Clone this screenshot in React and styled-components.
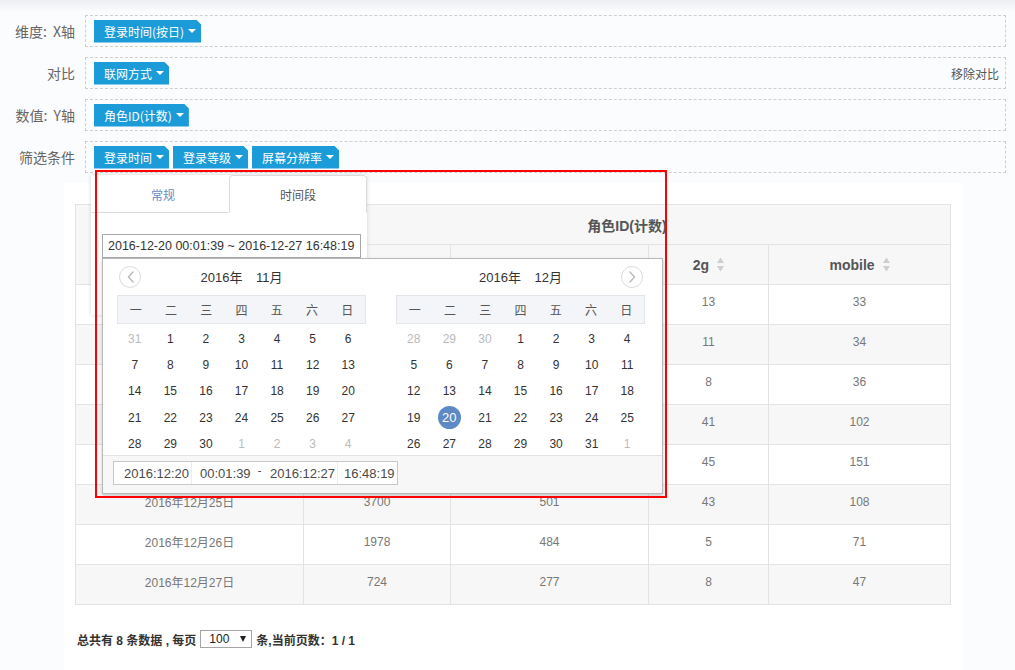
import React from 'react'
import styled, { createGlobalStyle } from 'styled-components'

const GlobalStyle = createGlobalStyle`
  html, body { margin: 0; padding: 0; }
  body {
    background: #fbfcfd;
    font-family: "Liberation Sans", "Noto Sans CJK SC", sans-serif;
    font-size: 12px;
    color: #555;
  }
`

const Page = styled.div`
  position: relative;
  width: 1015px;
  height: 670px;
  overflow: hidden;
  box-sizing: border-box;
  padding-top: 15px;
  background: linear-gradient(#eceef2 0, #fbfcfd 12px);
`

const FieldRow = styled.div`
  display: flex;
  align-items: center;
  margin-bottom: 10px;
`

const FieldLabel = styled.div`
  width: 75px;
  padding-right: 10px;
  text-align: right;
  font-family: "Noto Sans CJK SC", sans-serif;
  font-size: 14px;
  color: #666;
  white-space: nowrap;
  word-spacing: 3px;
`

const FieldBox = styled.div`
  flex: 1;
  margin-right: 9px;
  height: 32px;
  box-sizing: border-box;
  border: 1px dashed #cfcfcf;
  display: flex;
  align-items: center;
  gap: 4px;
  padding: 0 6px 0 8px;
`

const Tag = styled.div`
  height: 23px;
  display: inline-flex;
  align-items: center;
  padding: 0 5px 0 10px;
  background: #1b9bd7;
  color: #fff;
  font-family: "Noto Sans CJK SC", sans-serif;
  font-size: 12px;
  clip-path: polygon(0 0, calc(100% - 5px) 0, 100% 5px, 100% 100%, 0 100%);
`

const Caret = styled.span`
  width: 0;
  height: 0;
  margin-left: 4px;
  border-left: 4px solid transparent;
  border-right: 4px solid transparent;
  border-top: 4px solid #fff;
`

const RemoveLink = styled.span`
  margin-left: auto;
  font-family: "Noto Sans CJK SC", sans-serif;
  font-size: 12px;
  color: #555;
`

const Card = styled.div`
  margin-left: 64px;
  width: 898px;
  height: 500px;
  box-sizing: border-box;
  padding: 21px 11px 0;
  background: #fff;
`

const Table = styled.table`
  width: 875px;
  border-collapse: collapse;
  table-layout: fixed;
`

const Th = styled.th`
  height: 39px;
  padding: 0;
  border: 1px solid #e3e3e3;
  background: #f7f7f7;
  font-size: 14px;
  font-weight: bold;
  color: #555;
`

const ThInner = styled.span`
  display: inline-flex;
  align-items: center;
  gap: 8px;
`

const Tr = styled.tr`
  &:nth-child(even) td { background: #f7f7f7; }
`

const Td = styled.td`
  height: 33px;
  padding: 0 0 6px;
  border: 1px solid #e3e3e3;
  text-align: center;
  font-size: 12px;
  color: #777;
  background: #fff;
`

const Pager = styled.div`
  margin-top: 25px;
  height: 18px;
  display: flex;
  align-items: center;
  padding-left: 2px;
  font-size: 12px;
  font-weight: bold;
  color: #333;
`

const PageSelect = styled.div`
  width: 52px;
  height: 18px;
  box-sizing: border-box;
  margin: 0 4px;
  padding: 0 5px 0 8px;
  border: 1px solid #a5a5a5;
  background: #fff;
  display: flex;
  align-items: center;
  justify-content: space-between;
  font-weight: normal;
  color: #222;
  font-size: 12px;
`

const SelectArrow = styled.span`
  width: 0;
  height: 0;
  border-left: 3.5px solid transparent;
  border-right: 3.5px solid transparent;
  border-top: 6px solid #222;
`

/* time range popup */
const Popup = styled.div`
  position: absolute;
  left: 91px;
  top: 175px;
  width: 276px;
  height: 140px;
  background: #fff;
  box-shadow: 0 0 4px rgba(0, 0, 0, 0.16);
  z-index: 5;
`

const Tabs = styled.div`
  display: flex;
  height: 38px;
`

const TabItem = styled.div`
  flex: 0 0 138px;
  box-sizing: border-box;
  display: flex;
  align-items: center;
  justify-content: center;
  font-family: "Noto Sans CJK SC", sans-serif;
  font-size: 12px;
  color: ${(p) => (p.$active ? '#555' : '#6a8cc2')};
  border: 1px solid ${(p) => (p.$active ? '#dcdcdc' : 'transparent')};
  border-bottom-color: ${(p) => (p.$active ? 'transparent' : '#dcdcdc')};
  border-radius: 4px 4px 0 0;
  padding-left: ${(p) => (p.$active ? 0 : 6)}px;
`

const PopBody = styled.div`
  padding: 21px 6px 0 11px;
`

const InputWrap = styled.div`
  position: relative;
  width: 259px;
`

const RangeInput = styled.div`
  height: 24px;
  box-sizing: border-box;
  border: 1px solid #a9a9a9;
  padding: 0 5px;
  display: flex;
  align-items: center;
  font-size: 12.5px;
  color: #333;
  white-space: nowrap;
`

const Calendar = styled.div`
  position: absolute;
  top: 100%;
  left: 0;
  width: 561px;
  height: 236px;
  box-sizing: border-box;
  border: 1px solid #b8b8b8;
  background: #fff;
  box-shadow: 0 2px 4px rgba(0, 0, 0, 0.2);
  display: flex;
  flex-direction: column;
`

const Months = styled.div`
  display: flex;
  gap: 30px;
  padding: 0 17px 0 14px;
`

const Month = styled.div`
  width: 249px;
`

const MonthHead = styled.div`
  height: 36px;
  display: grid;
  grid-template-columns: 24px 1fr 24px;
  align-items: center;
`

const MonthTitle = styled.div`
  grid-column: 2;
  text-align: center;
  font-size: 13px;
  color: #333;
  word-spacing: 10px;
  margin-top: -1px;
`

const NavBtn = styled.div`
  grid-column: ${(p) => (p.$next ? 3 : 1)};
  justify-self: ${(p) => (p.$next ? 'end' : 'start')};
  margin: ${(p) => (p.$next ? '0 2px 0 0' : '0 0 0 2px')};
  width: 22px;
  height: 22px;
  box-sizing: border-box;
  border: 1px solid #dcdcdc;
  border-radius: 50%;
  display: flex;
  align-items: center;
  justify-content: center;
`

const WeekBar = styled.div`
  height: 29px;
  box-sizing: border-box;
  border: 1px solid #e2e5e9;
  background: #f3f5f8;
  display: grid;
  grid-template-columns: repeat(7, 1fr);
  align-items: center;
  text-align: center;
  font-family: "Noto Sans CJK SC", sans-serif;
  font-size: 12px;
  color: #555;
`

const DayGrid = styled.div`
  display: grid;
  grid-template-columns: repeat(7, 1fr);
  grid-auto-rows: 26.3px;
`

const Day = styled.div`
  display: flex;
  align-items: center;
  justify-content: center;
  box-sizing: border-box;
  padding-top: 3px;
  font-size: 12px;
  color: ${(p) => (p.$muted ? '#bbb' : '#333')};
`

const Selected = styled.span`
  width: 23px;
  height: 23px;
  border-radius: 50%;
  background: #5d8ac4;
  color: #fff;
  display: flex;
  align-items: center;
  justify-content: center;
  font-size: 13px;
`

const CalFoot = styled.div`
  flex: 1;
  border-top: 1px solid #e3e3e3;
  background: #f7f7f7;
  padding: 5px 10px;
`

const TimeInput = styled.div`
  width: 285px;
  height: 24px;
  box-sizing: border-box;
  border: 1px solid #c8c8c8;
  background: #fff;
  display: flex;
  align-items: center;
`

const TimeSeg = styled.div`
  width: ${(p) => p.$w}px;
  height: 100%;
  box-sizing: border-box;
  padding-left: ${(p) => p.$pl}px;
  border-right: 1px solid ${(p) => (p.$edge ? '#ececec' : 'transparent')};
  display: flex;
  align-items: center;
  font-size: 13px;
  color: #4a4a4a;
  white-space: nowrap;
`

const TimeDash = styled.span`
  width: 5px;
  font-size: 11px;
  color: #333;
  text-align: center;
  margin-top: -6px;
`

const RedMark = styled.div`
  position: absolute;
  left: 95px;
  top: 170px;
  width: 572px;
  height: 328px;
  box-sizing: border-box;
  border: 2px solid #f00;
  z-index: 10;
  pointer-events: none;
`

function SortIcon() {
  return (
    <svg width="7" height="15" viewBox="0 0 7 15">
      <path d="M3.5 0.5 L7 6 L0 6 Z M0 9 L7 9 L3.5 14.5 Z" fill="#cfcfcf" />
    </svg>
  )
}

function Chevron({ dir }) {
  const d = dir === 'left' ? 'M8 2 L3.5 7 L8 12' : 'M3 2 L7.5 7 L3 12'
  return (
    <svg width="11" height="14" viewBox="0 0 11 14">
      <path d={d} fill="none" stroke="#bdbdbd" strokeWidth="1.6" strokeLinecap="round" strokeLinejoin="round" />
    </svg>
  )
}

const weekNames = ['一', '二', '三', '四', '五', '六', '日']

function buildDays(prevTail, count, nextHead) {
  const out = []
  prevTail.forEach((d) => out.push({ d, muted: true }))
  for (let i = 1; i <= count; i++) out.push({ d: i })
  for (let i = 1; i <= nextHead; i++) out.push({ d: i, muted: true })
  return out
}

const months = [
  { title: ['2016年', '11月'], days: buildDays([31], 30, 4), nav: 'left' },
  { title: ['2016年', '12月'], days: buildDays([28, 29, 30], 31, 1), nav: 'right', selected: 20 },
]

function MonthView({ m }) {
  return (
    <Month>
      <MonthHead>
        {m.nav === 'left' && <NavBtn><Chevron dir="left" /></NavBtn>}
        <MonthTitle>{m.title.join(' ')}</MonthTitle>
        {m.nav === 'right' && <NavBtn $next><Chevron dir="right" /></NavBtn>}
      </MonthHead>
      <WeekBar>
        {weekNames.map((w) => <span key={w}>{w}</span>)}
      </WeekBar>
      <DayGrid>
        {m.days.map((x, i) => (
          <Day key={i} $muted={x.muted}>
            {!x.muted && x.d === m.selected ? <Selected>{x.d}</Selected> : x.d}
          </Day>
        ))}
      </DayGrid>
    </Month>
  )
}

const rows = [
  ['2016年12月20日', 2456, 566, 13, 33],
  ['2016年12月21日', 2310, 520, 11, 34],
  ['2016年12月22日', 2122, 498, 8, 36],
  ['2016年12月23日', 4387, 610, 41, 102],
  ['2016年12月24日', 4120, 587, 45, 151],
  ['2016年12月25日', 3700, 501, 43, 108],
  ['2016年12月26日', 1978, 484, 5, 71],
  ['2016年12月27日', 724, 277, 8, 47],
]

const colWidths = [228, 147, 198, 120, 182]

export default function App() {
  return (
    <Page>
      <GlobalStyle />

      <FieldRow>
        <FieldLabel>维度: X轴</FieldLabel>
        <FieldBox>
          <Tag>登录时间(按日)<Caret /></Tag>
        </FieldBox>
      </FieldRow>
      <FieldRow>
        <FieldLabel>对比</FieldLabel>
        <FieldBox>
          <Tag>联网方式<Caret /></Tag>
          <RemoveLink>移除对比</RemoveLink>
        </FieldBox>
      </FieldRow>
      <FieldRow>
        <FieldLabel>数值: Y轴</FieldLabel>
        <FieldBox>
          <Tag>角色ID(计数)<Caret /></Tag>
        </FieldBox>
      </FieldRow>
      <FieldRow>
        <FieldLabel>筛选条件</FieldLabel>
        <FieldBox>
          <Tag>登录时间<Caret /></Tag>
          <Tag>登录等级<Caret /></Tag>
          <Tag>屏幕分辨率<Caret /></Tag>
        </FieldBox>
      </FieldRow>

      <Card>
        <Table>
          <colgroup>
            {colWidths.map((w, i) => <col key={i} style={{ width: w }} />)}
          </colgroup>
          <thead>
            <tr>
              <Th rowSpan={2}>登录时间(按日)</Th>
              <Th colSpan={4}>角色ID(计数)</Th>
            </tr>
            <tr>
              {['wifi', '3g', '2g', 'mobile'].map((h) => (
                <Th key={h}>
                  <ThInner>{h}<SortIcon /></ThInner>
                </Th>
              ))}
            </tr>
          </thead>
          <tbody>
            {rows.map((r) => (
              <Tr key={r[0]}>
                {r.map((c, i) => <Td key={i}>{c}</Td>)}
              </Tr>
            ))}
          </tbody>
        </Table>

        <Pager>
          总共有 8 条数据 , 每页
          <PageSelect>100<SelectArrow /></PageSelect>
          条,当前页数：1 / 1
        </Pager>
      </Card>

      <Popup>
        <Tabs>
          <TabItem>常规</TabItem>
          <TabItem $active>时间段</TabItem>
        </Tabs>
        <PopBody>
          <InputWrap>
            <RangeInput>2016-12-20 00:01:39 ~ 2016-12-27 16:48:19</RangeInput>
            <Calendar>
              <Months>
                {months.map((m) => <MonthView key={m.title[1]} m={m} />)}
              </Months>
              <CalFoot>
                <TimeInput>
                  <TimeSeg $w={78} $pl={10} $edge>2016:12:20</TimeSeg>
                  <TimeSeg $w={65} $pl={8}>00:01:39</TimeSeg>
                  <TimeDash>-</TimeDash>
                  <TimeSeg $w={76} $pl={8} $edge>2016:12:27</TimeSeg>
                  <TimeSeg $w={59} $pl={6}>16:48:19</TimeSeg>
                </TimeInput>
              </CalFoot>
            </Calendar>
          </InputWrap>
        </PopBody>
      </Popup>

      <RedMark />
    </Page>
  )
}
